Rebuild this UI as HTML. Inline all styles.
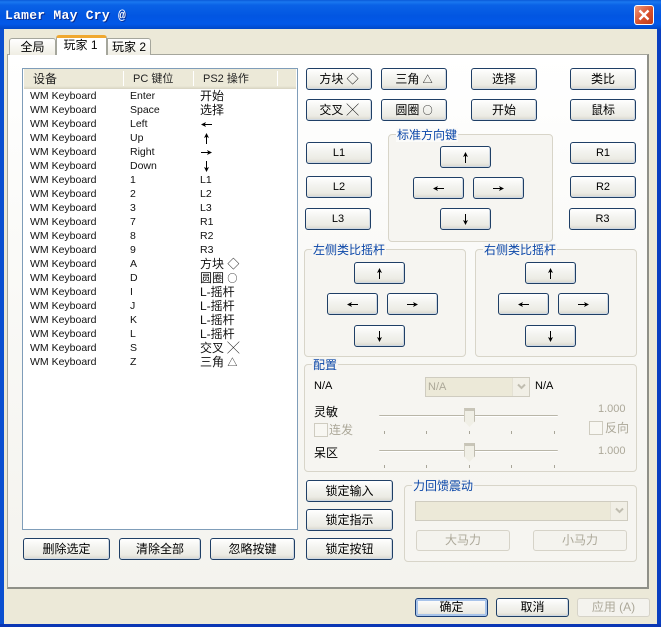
<!DOCTYPE html>
<html>
<head>
<meta charset="utf-8">
<style>
html,body{margin:0;padding:0;background:#0a3bc4;}
#w{position:relative;width:661px;height:627px;overflow:hidden;background:#ece9d8;font-family:"Liberation Sans","WenQuanYi Zen Hei","Noto Sans CJK SC",sans-serif;font-size:12px;color:#000;}
#w div{position:absolute;box-sizing:border-box;}
#w i{font-style:normal;font-family:"Noto Sans CJK SC",sans-serif;font-size:10px;}
#w svg{vertical-align:middle;}
.tb{left:0;top:0;width:661px;height:29px;background:linear-gradient(#0a5ad8 0,#1a78f0 2px,#0a62e6 5px,#0256e2 16px,#0258e8 24px,#0148c8 29px);}
.fl{left:0;top:29px;width:4px;height:598px;background:#0a4fd0;}
.fr{left:657px;top:29px;width:4px;height:598px;background:#0a3fc0;}
.fb{left:0;top:624px;width:661px;height:3px;background:#0a36b4;}
.t{white-space:nowrap;line-height:14px;height:14px;}
.b{border:1px solid #1f3f66;border-radius:3px;background:linear-gradient(#ffffff 0,#f4f4f0 40%,#ecebe4 80%,#d8d6cc 100%);text-align:center;line-height:20px;white-space:nowrap;font-size:12px;box-shadow:inset -1px -1px 0 #cfd8e2;}
.d{border:1px solid #d6d3c8;border-radius:3px;background:#f4f3ee;text-align:center;line-height:19px;color:#aca899;white-space:nowrap;}
.g{border:1px solid #d8d5c9;border-radius:4px;}
.l{background:#f4f3ee;color:#0a46a8;white-space:nowrap;line-height:14px;height:14px;padding:0 1px;}
.g1{background:#f6f5f1;}
.r{left:30px;height:14px;line-height:14px;white-space:nowrap;font-size:10.5px;width:260px;color:#111;}
.r span{position:absolute;top:0;white-space:nowrap;}
.k{left:100px;}
.o{left:170px;font-size:12px;}
.c{background:#ece9d8;border:1px solid #cfccc0;}
.ar{background:#f1efe6;border-left:1px solid #e4e1d4;text-align:center;line-height:16px;}
.tr{height:2px;background:#b9b6a8;border-bottom:1px solid #fff;border-radius:1px;}
.tk{width:1px;height:3px;background:#a8a598;}
.th{width:11px;height:19px;background:#f0efe6;border-top:3px solid #c8c5b8;border-left:1px solid #d0cdc0;border-right:1px solid #c0bdb0;clip-path:polygon(0 0,100% 0,100% 70%,50% 100%,0 70%);}
.cb{width:14px;height:14px;background:#f8f7f2;border:1px solid #cfccc0;}
.gr{color:#aca899;}
.h{top:72px;height:14px;line-height:14px;font-size:11px;white-space:nowrap;color:#222;}
.sp{top:71px;width:1px;height:15px;background:#cfccbc;border-right:1px solid #fff;}
</style>
</head>
<body>
<div id="w">
<div class="tb"></div>
<div class="fl"></div>
<div class="fr"></div>
<div class="fb"></div>
<div class="t" style="left:5px;top:9px;color:#fff;font:bold 13px/14px 'Liberation Mono',monospace;letter-spacing:0.27px;text-shadow:1px 1px 0 #0a2c90;">Lamer May Cry @</div>
<div style="left:634px;top:5px;width:20px;height:20px;border:1px solid #fff;border-radius:3px;background:linear-gradient(135deg,#ee9a7c,#d8502c 55%,#c03a18);"><svg width="18" height="18" style="display:block"><path d="M4.5 4.5L13.5 13.5M13.5 4.5L4.5 13.5" stroke="#fff" stroke-width="2.4" fill="none"/></svg></div>

<!-- panel -->
<div style="left:7px;top:54px;width:642px;height:535px;background:linear-gradient(#ffffff 0,#fbfbf9 30%,#f4f3ee 100%);border:1px solid #a5a69c;border-right:2px solid #8f9088;border-bottom:2px solid #8f9088;"></div>

<!-- tabs -->
<div style="left:9px;top:38px;width:47px;height:17px;background:linear-gradient(#fff,#f0eee4);border:1px solid #a5a69c;border-bottom:0;border-radius:3px 3px 0 0;text-align:center;line-height:16px;">全局</div>
<div style="left:107px;top:38px;width:44px;height:17px;background:linear-gradient(#fff,#f0eee4);border:1px solid #a5a69c;border-bottom:0;border-radius:0 3px 0 0;text-align:center;line-height:16px;">玩家 2</div>
<div style="left:56px;top:35px;width:51px;height:20px;background:#fff;border:1px solid #a5a69c;border-top:3px solid #f0a830;border-bottom:0;border-radius:3px 3px 0 0;text-align:center;line-height:15px;padding-right:2px;">玩家 1</div>

<!-- list -->
<div style="left:22px;top:68px;width:276px;height:462px;background:#fff;border:1px solid #7f9db9;"></div>
<div style="left:24px;top:69px;width:272px;height:20px;background:linear-gradient(#ece9d8 0,#ece9d8 85%,#d6d2c0 100%);"></div>
<div class="h" style="left:33px;font-size:12px;">设备</div>
<div class="h" style="left:133px;">PC 键位</div>
<div class="h" style="left:203px;">PS2 操作</div>
<div class="sp" style="left:123px;"></div>
<div class="sp" style="left:193px;"></div>
<div class="sp" style="left:277px;"></div>

<div class="r" style="top:89px;">WM Keyboard<span class="k">Enter</span><span class="o">开始</span></div>
<div class="r" style="top:103px;">WM Keyboard<span class="k">Space</span><span class="o">选择</span></div>
<div class="r" style="top:117px;">WM Keyboard<span class="k">Left</span><span class="o" style="left:171px;"><svg width="11" height="7"><path d="M0 3.5L5 1L4 3H11V4H4L5 6Z"/></svg></span></div>
<div class="r" style="top:131px;">WM Keyboard<span class="k">Up</span><span class="o" style="left:173px;"><svg width="7" height="11"><path d="M3.5 0L6 5L4 4V11H3V4L1 5Z"/></svg></span></div>
<div class="r" style="top:145px;">WM Keyboard<span class="k">Right</span><span class="o" style="left:171px;"><svg width="11" height="7"><path d="M11 3.5L6 1L7 3H0V4H7L6 6Z"/></svg></span></div>
<div class="r" style="top:159px;">WM Keyboard<span class="k">Down</span><span class="o" style="left:173px;"><svg width="7" height="11"><path d="M3.5 11L6 6L4 7V0H3V7L1 6Z"/></svg></span></div>
<div class="r" style="top:173px;">WM Keyboard<span class="k">1</span><span class="o" style="font-size:10.5px;">L1</span></div>
<div class="r" style="top:187px;">WM Keyboard<span class="k">2</span><span class="o" style="font-size:10.5px;">L2</span></div>
<div class="r" style="top:201px;">WM Keyboard<span class="k">3</span><span class="o" style="font-size:10.5px;">L3</span></div>
<div class="r" style="top:215px;">WM Keyboard<span class="k">7</span><span class="o" style="font-size:10.5px;">R1</span></div>
<div class="r" style="top:229px;">WM Keyboard<span class="k">8</span><span class="o" style="font-size:10.5px;">R2</span></div>
<div class="r" style="top:243px;">WM Keyboard<span class="k">9</span><span class="o" style="font-size:10.5px;">R3</span></div>
<div class="r" style="top:257px;">WM Keyboard<span class="k">A</span><span class="o">方块 ◇</span></div>
<div class="r" style="top:271px;">WM Keyboard<span class="k">D</span><span class="o">圆圈 <i>○</i></span></div>
<div class="r" style="top:285px;">WM Keyboard<span class="k">I</span><span class="o">L-摇杆</span></div>
<div class="r" style="top:299px;">WM Keyboard<span class="k">J</span><span class="o">L-摇杆</span></div>
<div class="r" style="top:313px;">WM Keyboard<span class="k">K</span><span class="o">L-摇杆</span></div>
<div class="r" style="top:327px;">WM Keyboard<span class="k">L</span><span class="o">L-摇杆</span></div>
<div class="r" style="top:341px;">WM Keyboard<span class="k">S</span><span class="o">交叉 ╳</span></div>
<div class="r" style="top:355px;">WM Keyboard<span class="k">Z</span><span class="o">三角 <i>△</i></span></div>

<div class="b" style="left:23px;top:538px;width:87px;height:22px;">删除选定</div>
<div class="b" style="left:119px;top:538px;width:82px;height:22px;">清除全部</div>
<div class="b" style="left:210px;top:538px;width:85px;height:22px;">忽略按键</div>

<!-- top buttons -->
<div class="b" style="left:306px;top:68px;width:66px;height:22px;">方块 ◇</div>
<div class="b" style="left:381px;top:68px;width:66px;height:22px;">三角 <i>△</i></div>
<div class="b" style="left:471px;top:68px;width:66px;height:22px;">选择</div>
<div class="b" style="left:570px;top:68px;width:66px;height:22px;">类比</div>
<div class="b" style="left:306px;top:99px;width:66px;height:22px;">交叉 ╳</div>
<div class="b" style="left:381px;top:99px;width:66px;height:22px;">圆圈 <i>○</i></div>
<div class="b" style="left:471px;top:99px;width:66px;height:22px;">开始</div>
<div class="b" style="left:570px;top:99px;width:66px;height:22px;">鼠标</div>
<div class="b" style="left:306px;top:142px;width:66px;height:22px;font-size:11px;">L1</div>
<div class="b" style="left:306px;top:176px;width:66px;height:22px;font-size:11px;">L2</div>
<div class="b" style="left:305px;top:208px;width:66px;height:22px;font-size:11px;">L3</div>
<div class="b" style="left:570px;top:142px;width:66px;height:22px;font-size:11px;">R1</div>
<div class="b" style="left:570px;top:176px;width:66px;height:22px;font-size:11px;">R2</div>
<div class="b" style="left:569px;top:208px;width:67px;height:22px;font-size:11px;">R3</div>

<!-- d-pad group -->
<div class="g g1" style="left:388px;top:134px;width:165px;height:108px;"></div>
<div class="l" style="left:396px;top:128px;background:#fbfbf9;">标准方向键</div>
<div class="b" style="left:440px;top:146px;width:51px;height:22px;"><svg width="7" height="11"><path d="M3.5 0L6 5L4 4V11H3V4L1 5Z"/></svg></div>
<div class="b" style="left:413px;top:177px;width:51px;height:22px;"><svg width="11" height="7"><path d="M0 3.5L5 1L4 3H11V4H4L5 6Z"/></svg></div>
<div class="b" style="left:473px;top:177px;width:51px;height:22px;"><svg width="11" height="7"><path d="M11 3.5L6 1L7 3H0V4H7L6 6Z"/></svg></div>
<div class="b" style="left:440px;top:208px;width:51px;height:22px;"><svg width="7" height="11"><path d="M3.5 11L6 6L4 7V0H3V7L1 6Z"/></svg></div>

<!-- left stick -->
<div class="g g1" style="left:304px;top:249px;width:162px;height:108px;"></div>
<div class="l" style="left:312px;top:243px;background:#f8f7f3;">左侧类比摇杆</div>
<div class="b" style="left:354px;top:262px;width:51px;height:22px;"><svg width="7" height="11"><path d="M3.5 0L6 5L4 4V11H3V4L1 5Z"/></svg></div>
<div class="b" style="left:327px;top:293px;width:51px;height:22px;"><svg width="11" height="7"><path d="M0 3.5L5 1L4 3H11V4H4L5 6Z"/></svg></div>
<div class="b" style="left:387px;top:293px;width:51px;height:22px;"><svg width="11" height="7"><path d="M11 3.5L6 1L7 3H0V4H7L6 6Z"/></svg></div>
<div class="b" style="left:354px;top:325px;width:51px;height:22px;"><svg width="7" height="11"><path d="M3.5 11L6 6L4 7V0H3V7L1 6Z"/></svg></div>

<!-- right stick -->
<div class="g g1" style="left:475px;top:249px;width:162px;height:108px;"></div>
<div class="l" style="left:483px;top:243px;background:#f8f7f3;">右侧类比摇杆</div>
<div class="b" style="left:525px;top:262px;width:51px;height:22px;"><svg width="7" height="11"><path d="M3.5 0L6 5L4 4V11H3V4L1 5Z"/></svg></div>
<div class="b" style="left:498px;top:293px;width:51px;height:22px;"><svg width="11" height="7"><path d="M0 3.5L5 1L4 3H11V4H4L5 6Z"/></svg></div>
<div class="b" style="left:558px;top:293px;width:51px;height:22px;"><svg width="11" height="7"><path d="M11 3.5L6 1L7 3H0V4H7L6 6Z"/></svg></div>
<div class="b" style="left:525px;top:325px;width:51px;height:22px;"><svg width="7" height="11"><path d="M3.5 11L6 6L4 7V0H3V7L1 6Z"/></svg></div>

<!-- config -->
<div class="g g1" style="left:304px;top:364px;width:333px;height:108px;"></div>
<div class="l" style="left:312px;top:358px;background:#f6f5f1;">配置</div>
<div class="t" style="left:314px;top:379px;font-size:11px;">N/A</div>
<div class="c" style="left:425px;top:377px;width:105px;height:20px;"></div>
<div class="t gr" style="left:428px;top:380px;font-size:11px;">N/A</div>
<div class="ar" style="left:512px;top:378px;width:17px;height:18px;"><svg width="9" height="7"><path d="M1 1.5L4.5 5L8 1.5" stroke="#c0bdb0" stroke-width="2" fill="none"/></svg></div>
<div class="t" style="left:535px;top:379px;font-size:11px;">N/A</div>
<div class="t" style="left:314px;top:405px;">灵敏</div>
<div class="tr" style="left:379px;top:415px;width:179px;"></div>
<div class="th" style="left:464px;top:408px;"></div>
<div class="tk" style="left:384px;top:431px;"></div>
<div class="tk" style="left:426px;top:431px;"></div>
<div class="tk" style="left:469px;top:431px;"></div>
<div class="tk" style="left:511px;top:431px;"></div>
<div class="tk" style="left:554px;top:431px;"></div>
<div class="cb" style="left:314px;top:423px;"></div>
<div class="t gr" style="left:329px;top:423px;">连发</div>
<div class="t gr" style="left:598px;top:402px;font-size:11px;">1.000</div>
<div class="cb" style="left:589px;top:421px;"></div>
<div class="t gr" style="left:605px;top:421px;">反向</div>
<div class="t" style="left:314px;top:446px;">呆区</div>
<div class="tr" style="left:379px;top:450px;width:179px;"></div>
<div class="th" style="left:464px;top:443px;"></div>
<div class="tk" style="left:384px;top:465px;"></div>
<div class="tk" style="left:426px;top:465px;"></div>
<div class="tk" style="left:469px;top:465px;"></div>
<div class="tk" style="left:511px;top:465px;"></div>
<div class="tk" style="left:554px;top:465px;"></div>
<div class="t gr" style="left:598px;top:444px;font-size:11px;">1.000</div>

<!-- lock buttons -->
<div class="b" style="left:306px;top:480px;width:87px;height:22px;">锁定输入</div>
<div class="b" style="left:306px;top:509px;width:87px;height:22px;">锁定指示</div>
<div class="b" style="left:306px;top:538px;width:87px;height:22px;">锁定按钮</div>

<!-- force feedback -->
<div class="g g1" style="left:404px;top:485px;width:233px;height:77px;"></div>
<div class="l" style="left:412px;top:479px;background:#f6f5f1;">力回馈震动</div>
<div class="c" style="left:415px;top:501px;width:213px;height:20px;"></div>
<div class="ar" style="left:610px;top:502px;width:17px;height:18px;"><svg width="9" height="7"><path d="M1 1.5L4.5 5L8 1.5" stroke="#c0bdb0" stroke-width="2" fill="none"/></svg></div>
<div class="d" style="left:416px;top:530px;width:94px;height:21px;">大马力</div>
<div class="d" style="left:533px;top:530px;width:94px;height:21px;">小马力</div>

<!-- dialog buttons -->
<div class="b" style="left:415px;top:598px;width:73px;height:19px;line-height:17px;border-color:#1a3f78;box-shadow:inset 0 0 0 2px #a8c4ea;">确定</div>
<div class="b" style="left:496px;top:598px;width:73px;height:19px;line-height:17px;">取消</div>
<div class="d" style="left:577px;top:598px;width:73px;height:19px;line-height:17px;">应用 (A)</div>
</div>
</body>
</html>
